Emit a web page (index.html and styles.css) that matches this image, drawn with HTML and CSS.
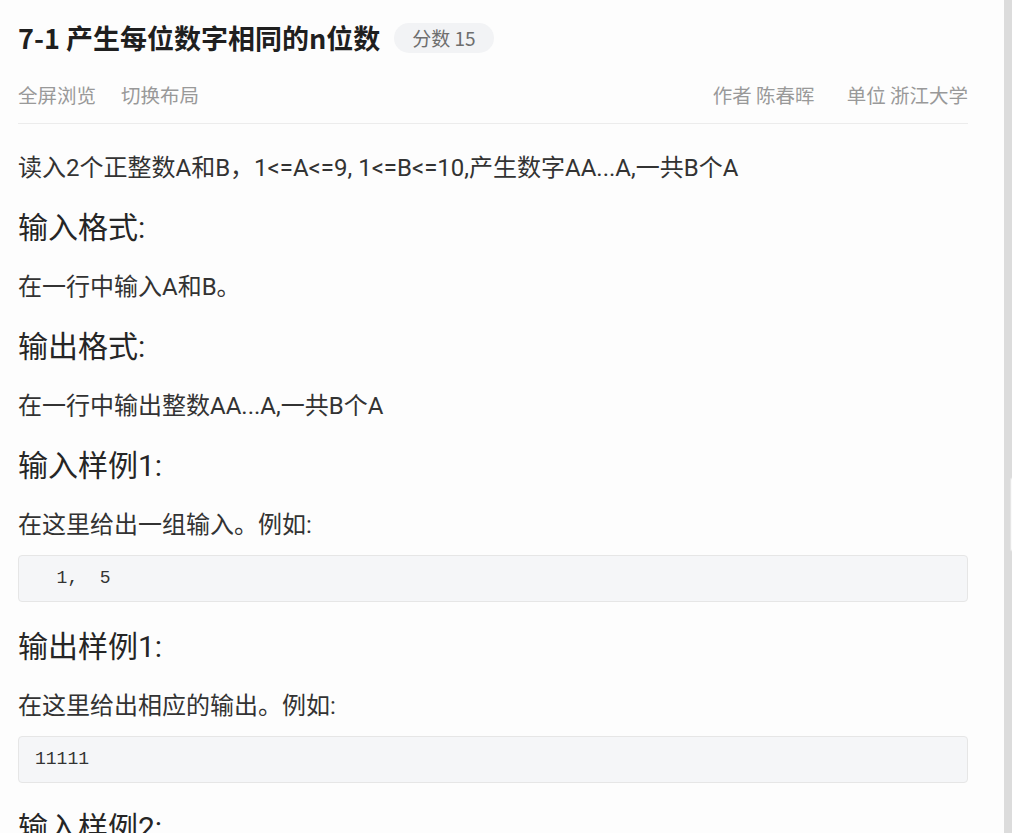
FILE: index.html
```html
<!DOCTYPE html>
<html lang="zh-CN">
<head>
<meta charset="utf-8">
<title>7-1 产生每位数字相同的n位数</title>
<link rel="stylesheet" href="styles.css">
</head>
<body>
<div class="layout">
  <main class="page">
    <header class="head">
      <div class="title-row">
        <h1 class="title">7-1 产生每位数字相同的n位数</h1>
        <span class="score">分数 15</span>
      </div>
      <div class="meta-row">
        <div class="actions">
          <span>全屏浏览</span>
          <span>切换布局</span>
        </div>
        <div class="info">
          <span>作者 陈春晖</span>
          <span>单位 浙江大学</span>
        </div>
      </div>
    </header>
    <article class="content">
      <p>读入2个正整数A和B，1&lt;=A&lt;=9, 1&lt;=B&lt;=10,产生数字AA...A,一共B个A</p>
      <h3>输入格式:</h3>
      <p>在一行中输入A和B。</p>
      <h3>输出格式:</h3>
      <p>在一行中输出整数AA...A,一共B个A</p>
      <h3>输入样例1:</h3>
      <p>在这里给出一组输入。例如:</p>
      <pre class="code">  1,  5</pre>
      <h3>输出样例1:</h3>
      <p>在这里给出相应的输出。例如:</p>
      <pre class="code">11111</pre>
      <h3>输入样例2:</h3>
    </article>
  </main>
  <div class="scrollbar"></div>
  <div class="side-tab"></div>
</div>
</body>
</html>
```
FILE: styles.css
```css
html, body {
  margin: 0;
  padding: 0;
  height: 100%;
  overflow: hidden;
}
body {
  background: #fdfdfd;
  font-family: Roboto, "Noto Sans CJK SC", sans-serif;
  color: #333;
}
.layout {
  display: flex;
  height: 833px;
  position: relative;
}
.page {
  flex: 1;
  padding: 0 36px 0 18px;
  overflow: hidden;
}
.scrollbar {
  width: 8px;
  background: #dcdcdc;
}
.side-tab {
  position: absolute;
  left: 1010px;
  top: 477px;
  width: 10px;
  height: 73px;
  background: #fafafa;
  border: 1px solid #e6e6e6;
  border-radius: 3px;
}
.head {
  border-bottom: 1px solid #ececec;
}
.title-row {
  display: flex;
  align-items: center;
  gap: 14px;
  padding-top: 18px;
  height: 40px;
}
.title {
  margin: 0;
  font-size: 27px;
  font-weight: 600;
  color: #1f1f1f;
  line-height: 40px;
  font-family: "Noto Sans CJK SC", sans-serif;
}
.score {
  background: #f2f3f5;
  color: #6e6e6e;
  font-size: 19px;
  border-radius: 16px;
  padding: 0 18px;
  height: 30px;
  line-height: 30px;
  font-family: "Noto Sans CJK SC", sans-serif;
}
.meta-row {
  display: flex;
  justify-content: space-between;
  align-items: center;
  height: 28px;
  margin-top: 22px;
  padding-bottom: 15px;
  font-size: 19.5px;
  color: #999;
  font-family: "Noto Sans CJK SC", sans-serif;
}
.actions, .info {
  display: flex;
  gap: 25px;
}
.info {
  gap: 32px;
}
.content {
  display: flex;
  flex-direction: column;
  padding-top: 26px;
}
.content p {
  margin: 0 0 12px;
  font-size: 24px;
  line-height: 36px;
  color: #333;
}
.content h3 {
  margin: 10px 0 21px;
  font-size: 30px;
  line-height: 40px;
  font-weight: 400;
  color: #262626;
}
.code {
  margin: 0 0 15px;
  background: #f5f6f8;
  border: 1px solid #e6e6e6;
  border-radius: 4px;
  padding: 12px 16px;
  font-family: "Liberation Mono", monospace;
  font-size: 18px;
  line-height: 21px;
  color: #333;
}
```
